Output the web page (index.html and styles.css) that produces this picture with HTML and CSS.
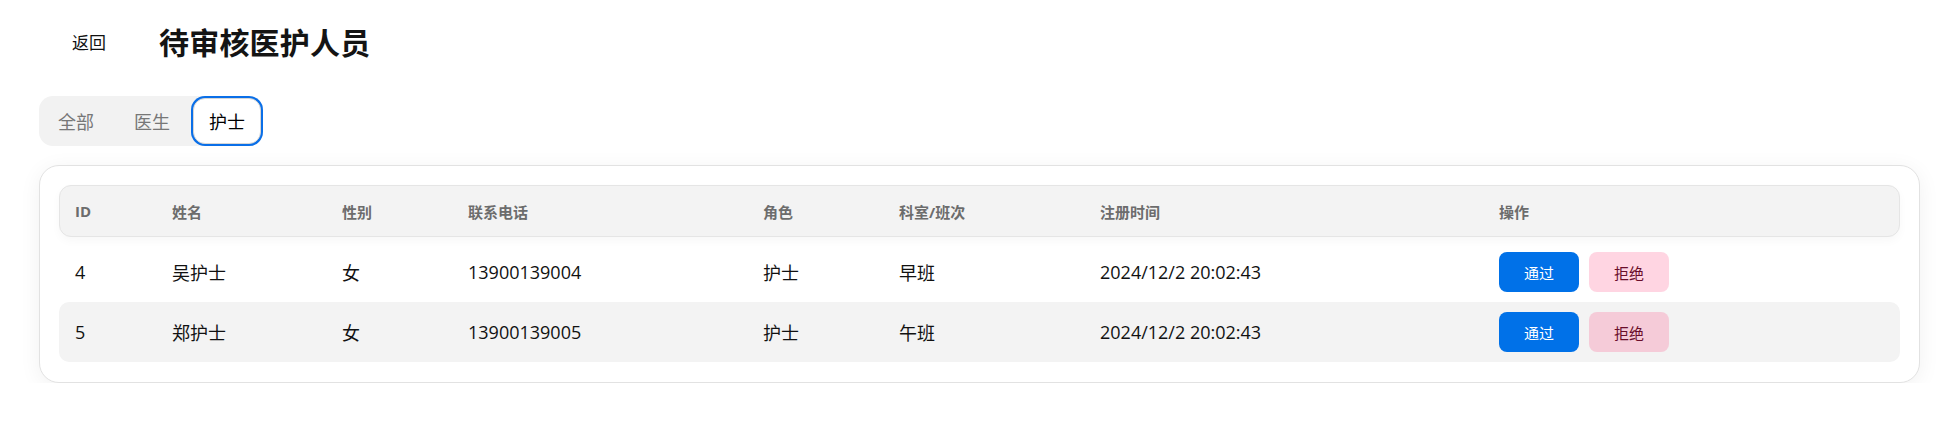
FILE: index.html
```html
<!DOCTYPE html>
<html lang="zh-CN">
<head>
<meta charset="utf-8">
<title>待审核医护人员</title>
<link rel="stylesheet" href="styles.css">
</head>
<body>
<div class="page">
  <div class="topbar">
    <button class="back">返回</button>
    <h1 class="title">待审核医护人员</h1>
  </div>
  <div class="tabs">
    <button class="tab">全部</button>
    <button class="tab">医生</button>
    <button class="tab active">护士</button>
  </div>
  <div class="card">
    <div class="row head">
      <div class="cell">ID</div>
      <div class="cell">姓名</div>
      <div class="cell">性别</div>
      <div class="cell">联系电话</div>
      <div class="cell">角色</div>
      <div class="cell">科室/班次</div>
      <div class="cell">注册时间</div>
      <div class="cell">操作</div>
    </div>
    <div class="row body">
      <div class="cell">4</div>
      <div class="cell">吴护士</div>
      <div class="cell">女</div>
      <div class="cell">13900139004</div>
      <div class="cell">护士</div>
      <div class="cell">早班</div>
      <div class="cell">2024/12/2 20:02:43</div>
      <div class="cell actions"><button class="btn ok">通过</button><button class="btn no">拒绝</button></div>
    </div>
    <div class="row body alt">
      <div class="cell">5</div>
      <div class="cell">郑护士</div>
      <div class="cell">女</div>
      <div class="cell">13900139005</div>
      <div class="cell">护士</div>
      <div class="cell">午班</div>
      <div class="cell">2024/12/2 20:02:43</div>
      <div class="cell actions"><button class="btn ok">通过</button><button class="btn no">拒绝</button></div>
    </div>
  </div>
</div>
</body>
</html>
```
FILE: styles.css
```css
* { box-sizing: border-box; }
html, body { margin: 0; padding: 0; background: #fff; }
body {
  font-family: "Open Sans", "Noto Sans CJK SC", sans-serif;
  color: #111;
}
.page {
  padding: 16px 32px 0 39px;
}
.topbar {
  display: flex;
  align-items: center;
  height: 50px;
  gap: 20px;
}
.back {
  font: inherit;
  font-size: 17px;
  color: #111;
  background: transparent;
  border: 0;
  padding: 8px 33px;
  cursor: pointer;
}
.title {
  margin: 0;
  font-size: 30px;
  font-weight: 700;
  color: #141414;
  letter-spacing: 0.2px;
}
.tabs {
  margin-top: 30px;
  display: inline-flex;
  gap: 6px;
  padding: 2px;
  background: #f2f2f2;
  border-radius: 14px;
  height: 50px;
}
.tab {
  font: inherit;
  font-size: 18px;
  color: #777;
  background: transparent;
  border: 0;
  border-radius: 12px;
  padding: 0 17px;
  height: 46px;
  cursor: pointer;
}
.tab.active {
  background: #fff;
  color: #000;
  border: 1px solid #d6d6d6;
  box-shadow: 0 0 0 2px #0a6fe8;
  padding: 0 15px;
}
.card {
  margin-top: 19px;
  background: #fff;
  border: 1px solid #e2e2e2;
  border-radius: 20px;
  padding: 19px 19px 20px;
  box-shadow: 0 4px 22px rgba(0, 0, 0, 0.06);
}
.row {
  display: grid;
  grid-template-columns: 97px 170px 126px 295px 136px 201px 399px 1fr;
  align-items: center;
}
.cell { padding-left: 16px; }
.head {
  height: 52px;
  background: #f3f3f3;
  border: 1px solid #e5e5e5;
  border-radius: 12px;
  font-size: 15px;
  font-weight: 700;
  color: #6c6c6c;
  box-shadow: 0 4px 10px rgba(0, 0, 0, 0.03);
}
.head .cell { padding-left: 15px; }
.body {
  height: 60px;
  font-size: 18px;
  color: #111;
  border-radius: 10px;
}
.head + .body { margin-top: 5px; }
.alt { background: #f3f3f3; }
.actions {
  display: flex;
  gap: 10px;
}
.btn {
  font: inherit;
  font-size: 15px;
  width: 80px;
  height: 40px;
  border: 0;
  border-radius: 8px;
  cursor: pointer;
}
.ok { background: #0071e8; color: #fff; }
.no { background: rgba(255, 45, 110, 0.2); color: #6a0d2a; }
```
